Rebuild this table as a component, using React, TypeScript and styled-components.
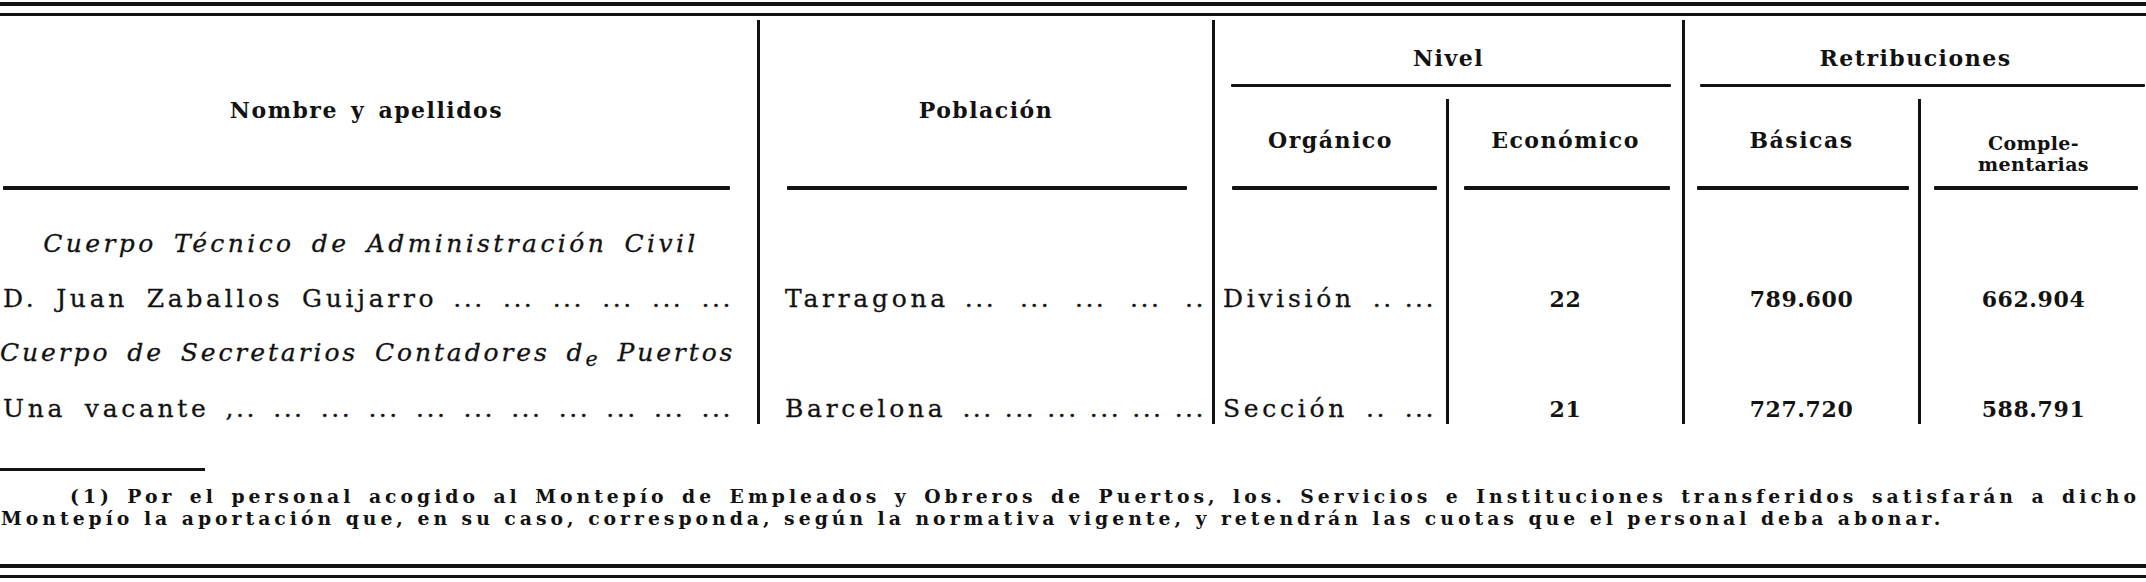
import React from "react";
import styled, { createGlobalStyle } from "styled-components";

const INK = "#121212";

const Global = createGlobalStyle`
  html, body { margin: 0; padding: 0; background: #ffffff; }
  body { width: 2146px; height: 582px; overflow: hidden; }
`;

const Page = styled.div`
  width: 2146px;
  height: 582px;
  box-sizing: border-box;
  padding-top: 2px;
  display: flex;
  flex-direction: column;
  font-family: "DejaVu Serif", "Liberation Serif", serif;
  color: ${INK};
  background: #ffffff;
`;

const DoubleRule = styled.div<{ $top?: number; $gap: number }>`
  display: flex;
  flex-direction: column;
  gap: ${(p) => p.$gap}px;
  margin-top: ${(p) => p.$top ?? 0}px;
`;

const Bar = styled.div<{ $h: number }>`
  height: ${(p) => p.$h}px;
  background: ${INK};
`;

const Table = styled.div`
  margin-top: 4px;
  display: grid;
  grid-template-columns: 757px 455px 234px 236px 236px 228px;
  grid-template-rows: 79px 105px repeat(4, 55px);
`;

const Cell = styled.div<{ $col: string; $row: string; $line?: boolean }>`
  grid-column: ${(p) => p.$col};
  grid-row: ${(p) => p.$row};
  border-left: ${(p) => (p.$line ? `3px solid ${INK}` : "none")};
  min-width: 0;
`;

const HeadCell = styled(Cell)`
  display: flex;
  flex-direction: column;
`;

const HeadLabel = styled.div<{ $pt?: number; $pb?: number; $pr?: number; $small?: boolean }>`
  flex: 1;
  display: flex;
  align-items: center;
  justify-content: center;
  padding-top: ${(p) => p.$pt ?? 0}px;
  padding-bottom: ${(p) => p.$pb ?? 0}px;
  padding-right: ${(p) => p.$pr ?? 0}px;
  font-weight: bold;
  font-size: ${(p) => (p.$small ? 19 : 22)}px;
  line-height: ${(p) => (p.$small ? 21 : 22)}px;
  letter-spacing: ${(p) => (p.$small ? 0.4 : 1.5)}px;
  word-spacing: 4px;
  text-align: center;
`;

const HeadRule = styled.div<{ $l: number; $r: number; $h?: number; $b?: number }>`
  height: ${(p) => p.$h ?? 4}px;
  margin: 0 ${(p) => p.$r}px ${(p) => p.$b ?? 14}px ${(p) => p.$l}px;
  background: ${INK};
  border-radius: 1px;
`;

const DataCell = styled(Cell)<{ $pl?: number; $pr?: number; $center?: boolean }>`
  display: flex;
  align-items: flex-end;
  justify-content: ${(p) => (p.$center ? "center" : "flex-start")};
  padding-left: ${(p) => p.$pl ?? 0}px;
  padding-right: ${(p) => p.$pr ?? 0}px;
  padding-bottom: 1px;
  white-space: nowrap;
`;

const DataText = styled.span`
  flex: none;
  font-size: 25px;
  line-height: 28px;
  letter-spacing: 3.7px;
  word-spacing: 7px;
  -webkit-text-stroke: 0.3px ${INK};
`;

const Leader = styled.span<{ $gap?: number }>`
  flex: 1;
  display: flex;
  justify-content: space-between;
  margin-left: ${(p) => p.$gap ?? 16}px;
  font-size: 25px;
  line-height: 28px;
  letter-spacing: 2.5px;
  -webkit-text-stroke: 0.3px ${INK};
`;

const GroupLabel = styled.div<{ $center?: boolean; $ls: number }>`
  width: 100%;
  box-sizing: border-box;
  padding-right: ${(p) => (p.$center ? 15 : 0)}px;
  font-size: 25px;
  line-height: 28px;
  font-style: italic;
  letter-spacing: ${(p) => p.$ls}px;
  word-spacing: 6px;
  text-align: ${(p) => (p.$center ? "center" : "left")};
  -webkit-text-stroke: 0.3px ${INK};
`;

const Lowered = styled.span`
  font-size: 0.82em;
  position: relative;
  top: 5px;
`;

const Num = styled.span`
  font-weight: bold;
  font-size: 22px;
  line-height: 28px;
  letter-spacing: 0.6px;
`;

const FootRule = styled.div`
  width: 205px;
  height: 3px;
  margin-top: 44px;
  background: ${INK};
`;

const Footnote = styled.div`
  margin-top: 14px;
  padding-right: 6px;
  font-size: 18.8px;
  font-weight: bold;
  line-height: 22px;
  letter-spacing: 4px;
`;

const FootLine = styled.div<{ $first?: boolean }>`
  padding-left: ${(p) => (p.$first ? 70 : 1)}px;
  white-space: nowrap;
  text-align: ${(p) => (p.$first ? "justify" : "left")};
  text-align-last: ${(p) => (p.$first ? "justify" : "left")};
`;

type Row = {
  name: string;
  nameDots: string;
  town: string;
  townDots: string;
  org: string;
  orgDots: string;
  eco: string;
  bas: string;
  comp: string;
};

const rows: Row[] = [
  {
    name: "D. Juan Zaballos Guijarro",
    nameDots: "... ... ... ... ... ...",
    town: "Tarragona",
    townDots: "... ... ... ... ..",
    org: "División",
    orgDots: ".. ...",
    eco: "22",
    bas: "789.600",
    comp: "662.904",
  },
  {
    name: "Una vacante",
    nameDots: ",.. ... ... ... ... ... ... ... ... ... ...",
    town: "Barcelona",
    townDots: "... ... ... ... ... ...",
    org: "Sección",
    orgDots: ".. ...",
    eco: "21",
    bas: "727.720",
    comp: "588.791",
  },
];

function Dots({ groups, gap }: { groups: string; gap?: number }) {
  return (
    <Leader $gap={gap}>
      {groups.split(" ").map((g, i) => (
        <span key={i}>{g}</span>
      ))}
    </Leader>
  );
}

function GroupRow({
  r,
  children,
  center,
  ls,
}: {
  r: number;
  children: React.ReactNode;
  center?: boolean;
  ls: number;
}) {
  const row = String(r);
  return (
    <>
      <DataCell $col="1" $row={row}>
        <GroupLabel $center={center} $ls={ls}>
          {children}
        </GroupLabel>
      </DataCell>
      <DataCell $col="2" $row={row} $line />
      <DataCell $col="3" $row={row} $line />
      <DataCell $col="4" $row={row} $line />
      <DataCell $col="5" $row={row} $line />
      <DataCell $col="6" $row={row} $line />
    </>
  );
}

function PersonRow({ r, d }: { r: number; d: Row }) {
  const row = String(r);
  return (
    <>
      <DataCell $col="1" $row={row} $pl={3} $pr={24}>
        <DataText>{d.name}</DataText>
        <Dots groups={d.nameDots} />
      </DataCell>
      <DataCell $col="2" $row={row} $line $pl={25} $pr={6}>
        <DataText>{d.town}</DataText>
        <Dots groups={d.townDots} />
      </DataCell>
      <DataCell $col="3" $row={row} $line $pl={8} $pr={10}>
        <DataText>{d.org}</DataText>
        <Dots groups={d.orgDots} gap={18} />
      </DataCell>
      <DataCell $col="4" $row={row} $line $center>
        <Num>{d.eco}</Num>
      </DataCell>
      <DataCell $col="5" $row={row} $line $center>
        <Num>{d.bas}</Num>
      </DataCell>
      <DataCell $col="6" $row={row} $line $center>
        <Num>{d.comp}</Num>
      </DataCell>
    </>
  );
}

export default function App() {
  return (
    <Page>
      <Global />
      <DoubleRule $gap={7}>
        <Bar $h={4} />
        <Bar $h={3} />
      </DoubleRule>

      <Table>
        <HeadCell $col="1" $row="1 / 3">
          <HeadLabel $pt={14} $pr={24}>
            Nombre y apellidos
          </HeadLabel>
          <HeadRule $l={3} $r={27} />
        </HeadCell>
        <HeadCell $col="2" $row="1 / 3" $line>
          <HeadLabel $pt={14}>Población</HeadLabel>
          <HeadRule $l={27} $r={25} />
        </HeadCell>
        <HeadCell $col="3 / 5" $row="1" $line>
          <HeadLabel $pt={12}>Nivel</HeadLabel>
          <HeadRule $l={16} $r={11} $h={3} $b={12} />
        </HeadCell>
        <HeadCell $col="5 / 7" $row="1" $line>
          <HeadLabel $pt={12}>Retribuciones</HeadLabel>
          <HeadRule $l={15} $r={1} $h={3} $b={12} />
        </HeadCell>
        <HeadCell $col="3" $row="2" $line>
          <HeadLabel $pb={6}>Orgánico</HeadLabel>
          <HeadRule $l={17} $r={9} />
        </HeadCell>
        <HeadCell $col="4" $row="2" $line>
          <HeadLabel $pb={6}>Económico</HeadLabel>
          <HeadRule $l={15} $r={12} />
        </HeadCell>
        <HeadCell $col="5" $row="2" $line>
          <HeadLabel $pb={6}>Básicas</HeadLabel>
          <HeadRule $l={12} $r={9} />
        </HeadCell>
        <HeadCell $col="6" $row="2" $line>
          <HeadLabel $pt={23} $small>
            Comple-
            <br />
            mentarias
          </HeadLabel>
          <HeadRule $l={13} $r={8} />
        </HeadCell>

        <GroupRow r={3} center ls={3.4}>
          Cuerpo Técnico de Administración Civil
        </GroupRow>
        <PersonRow r={4} d={rows[0]} />
        <GroupRow r={5} ls={2.9}>
          Cuerpo de Secretarios Contadores d<Lowered>e</Lowered> Puertos
        </GroupRow>
        <PersonRow r={6} d={rows[1]} />
      </Table>

      <FootRule />
      <Footnote>
        <FootLine $first>
          (1) Por el personal acogido al Montepío de Empleados y Obreros de Puertos, los. Servicios e Instituciones transferidos satisfarán a dicho
        </FootLine>
        <FootLine>
          Montepío la aportación que, en su caso, corresponda, según la normativa vigente, y retendrán las cuotas que el personal deba abonar.
        </FootLine>
      </Footnote>

      <DoubleRule $top={35} $gap={7}>
        <Bar $h={4} />
        <Bar $h={3} />
      </DoubleRule>
    </Page>
  );
}
